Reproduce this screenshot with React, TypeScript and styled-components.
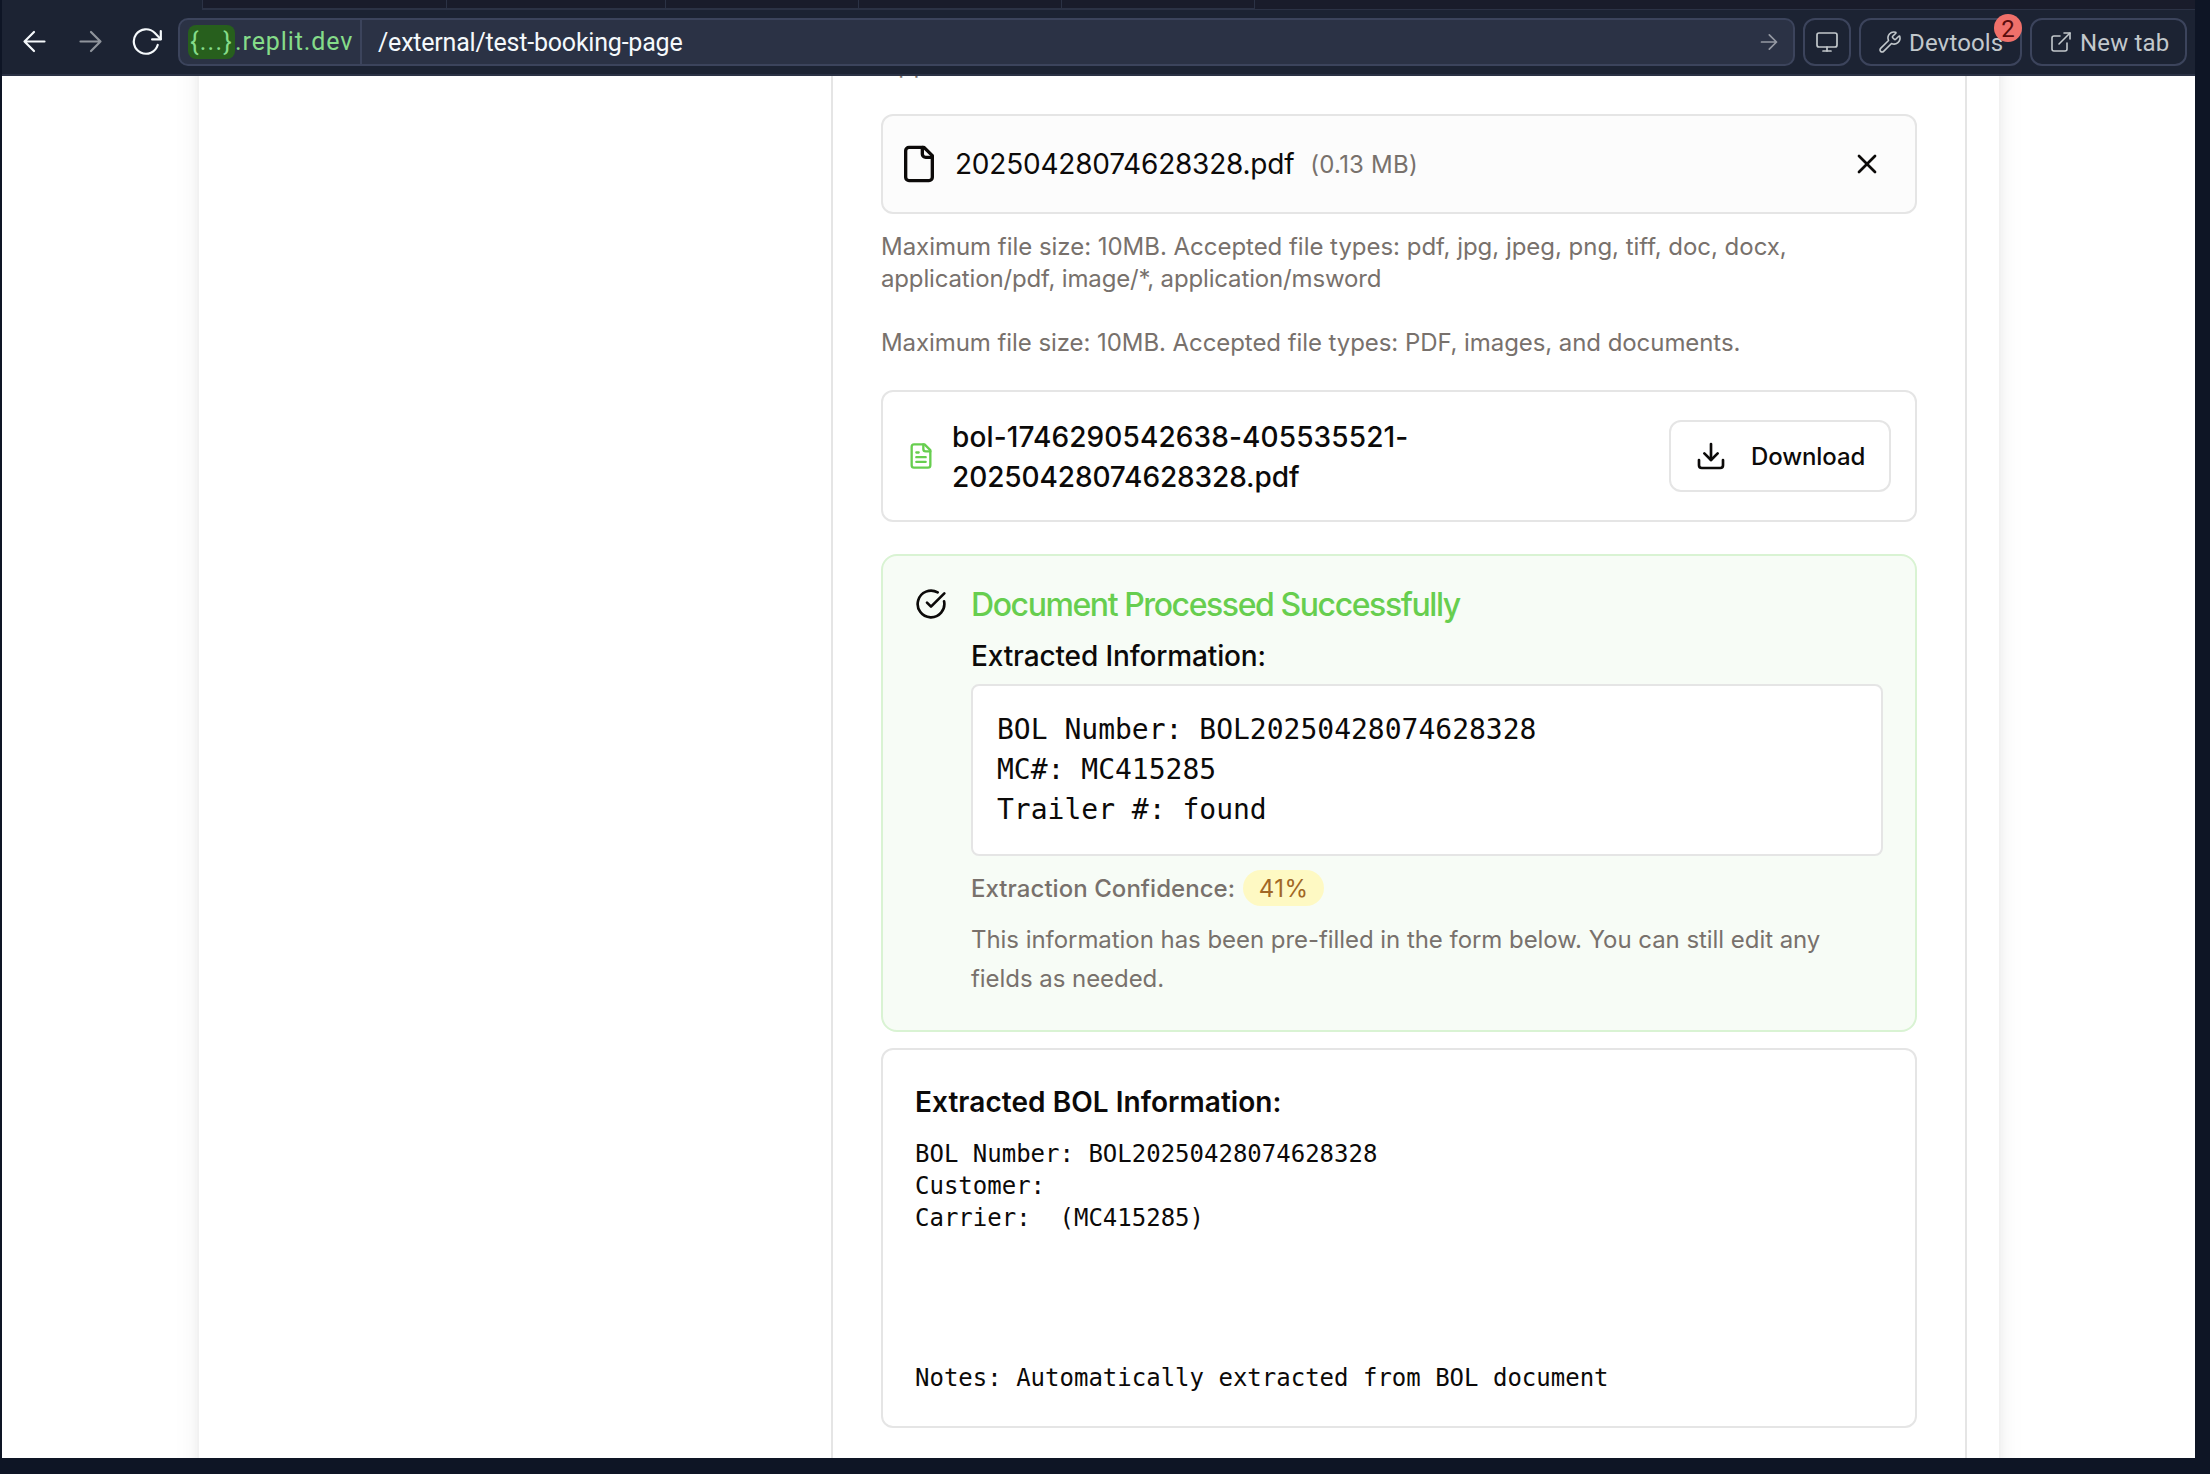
import React from 'react';
import styled, { createGlobalStyle } from 'styled-components';
import { Download, ExternalLink, Monitor, Wrench, X } from 'lucide-react';

const ui = `'Inter', 'Liberation Sans', sans-serif`;
const chromeFont = `'Roboto', 'Liberation Sans', sans-serif`;
const mono = `'DejaVu Sans Mono', 'Liberation Mono', monospace`;

const GlobalStyle = createGlobalStyle`
  *, *::before, *::after { box-sizing: border-box; }
  body { margin: 0; background: #0e1525; overflow: hidden; }
  p, h3, h4, pre { margin: 0; }
  svg { display: block; flex: none; }
`;

const Window = styled.div`
  display: flex;
  flex-direction: column;
  height: 1474px;
  padding: 0 15px 16px 2px;
  background: #0e1525;
`;

/* ---------- browser chrome ---------- */

const TabStrip = styled.div`
  display: flex;
  height: 10px;
  flex: none;
  padding-left: 200px;
  background: #1c2333;
`;

const Tab = styled.div<{ $width: number }>`
  width: ${(p) => p.$width}px;
  background: #191c2b;
  border-left: 1px solid #2b3245;
  border-bottom: 2px solid #2b3245;
`;

const TabRest = styled.div`
  flex: 1;
  background: #191c2b;
  border-left: 1px solid #2b3245;
  border-bottom: 1px solid #2b3245;
`;

const Toolbar = styled.div`
  display: flex;
  align-items: center;
  height: 66px;
  flex: none;
  padding: 0 8px 0 16px;
  gap: 8px;
  background: #1c2333;
  border-bottom: 2px solid #2b3245;
  font-family: ${chromeFont};
`;

const NavButtons = styled.div`
  display: flex;
  align-items: center;
  gap: 24px;
  width: 152px;
`;

const AddressBar = styled.div`
  display: flex;
  align-items: stretch;
  flex: 1;
  height: 48px;
  background: #2b3245;
  border: 2px solid #3c445c;
  border-radius: 10px;
  font-size: 25px;
  line-height: 46px;
`;

const Host = styled.div`
  display: flex;
  align-items: center;
  width: 182px;
  padding-left: 8px;
  border-right: 2px solid #3c445c;
  color: #85dc89;
  letter-spacing: 0.9px;
  white-space: nowrap;
`;

const HostChip = styled.span`
  height: 34px;
  width: 47px;
  flex: none;
  border-radius: 8px;
  background: #275f1d;
  line-height: 34px;
  text-align: center;
  letter-spacing: 1.2px;
`;

const Path = styled.div`
  flex: 1;
  padding-left: 16px;
  color: #f5f9fc;
  letter-spacing: -0.21px;
`;

const Go = styled.div`
  display: flex;
  align-items: center;
  padding-right: 15px;
`;

const ChromeButton = styled.div<{ $width: number }>`
  position: relative;
  display: flex;
  align-items: center;
  width: ${(p) => p.$width}px;
  height: 48px;
  padding-left: ${(p) => (p.$width > 50 ? 17 : 10)}px;
  gap: 7px;
  border: 2px solid #3c445c;
  border-radius: 12px;
  color: #c2c8cc;
  font-size: 24px;
  white-space: nowrap;
`;

const ButtonLabel = styled.span`
  padding-top: 2px;
  line-height: 44px;
  letter-spacing: 0.15px;
`;

const Badge = styled.span`
  position: absolute;
  top: -6px;
  right: -2px;
  width: 28px;
  height: 28px;
  border-radius: 50%;
  background: #f0706a;
  color: #5b0d0d;
  font-size: 24px;
  line-height: 30px;
  text-align: center;
`;

/* ---------- page ---------- */

const Viewport = styled.main`
  flex: 1;
  min-height: 0;
  overflow: hidden;
  background: #fff;
  font-family: ${ui};
  color: #0c0a09;
`;

const Sheet = styled.div`
  width: 1800px;
  height: 1502px;
  margin: -60px 0 0 197px;
  padding: 0 32px 0 632px;
  background: #fff;
  box-shadow: 0 0 30px -6px rgba(0, 0, 0, 0.1), 0 0 12px -4px rgba(0, 0, 0, 0.1);
`;

const Column = styled.div`
  height: 100%;
  padding: 32px 48px 0;
  border: solid #e5e5e5;
  border-width: 0 2px;
`;

const Note = styled.p<{ $top: number; $track?: number }>`
  margin-top: ${(p) => p.$top + 1}px;
  margin-bottom: -1px;
  color: #78716c;
  font-size: 24px;
  line-height: 32px;
  letter-spacing: ${(p) => p.$track ?? 0}px;
  white-space: nowrap;
`;

const Line = styled.span<{ $track: number }>`
  display: block;
  letter-spacing: ${(p) => p.$track}px;
`;

const FileCard = styled.section`
  display: flex;
  align-items: center;
  height: 100px;
  margin-top: 34px;
  padding: 0 16px;
  gap: 16px;
  background: #fcfcfc;
  border: 2px solid #e5e5e5;
  border-radius: 12px;
`;

const FileName = styled.span`
  font-size: 28px;
  line-height: 40px;
  letter-spacing: -0.22px;
`;

const FileSize = styled.span`
  padding-top: 2px;
  color: #78716c;
  font-size: 24px;
  line-height: 32px;
  letter-spacing: 0.22px;
`;

const RemoveButton = styled.div`
  display: grid;
  place-items: center;
  width: 64px;
  height: 64px;
  margin-left: auto;
`;

const DocumentCard = styled.section`
  display: flex;
  align-items: center;
  height: 132px;
  margin-top: 32px;
  padding: 0 24px;
  gap: 17px;
  border: 2px solid #e5e5e5;
  border-radius: 12px;
`;

const DocumentName = styled.div`
  flex: 1;
  padding-top: 1px;
  font-size: 28px;
  font-weight: 500;
  line-height: 40px;
`;

const DownloadButton = styled.div`
  display: flex;
  align-items: center;
  width: 222px;
  height: 72px;
  padding-left: 24px;
  gap: 24px;
  border: 2px solid #e5e5e5;
  border-radius: 12px;
  font-size: 24px;
  font-weight: 500;
  letter-spacing: -0.1px;
`;

const SuccessCard = styled.section`
  display: flex;
  gap: 24px;
  height: 478px;
  margin-top: 32px;
  padding: 32px;
  background: #f7fcf6;
  border: 2px solid #d9f3d3;
  border-radius: 16px;
`;

const SuccessBody = styled.div`
  flex: 1;
`;

const SuccessTitle = styled.h3`
  padding-top: 1px;
  color: #67ce4f;
  font-size: 32px;
  font-weight: 500;
  line-height: 32px;
  letter-spacing: -1.42px;
`;

const SubTitle = styled.h4`
  margin-top: 15px;
  font-size: 28px;
  font-weight: 500;
  line-height: 40px;
  letter-spacing: -0.13px;
`;

const Summary = styled.pre`
  height: 172px;
  width: 912px;
  margin-top: 8px;
  padding: 24px;
  background: #fff;
  border: 2px solid #e5e5e5;
  border-radius: 8px;
  font: 28px/40px ${mono};
`;

const Confidence = styled.div`
  display: flex;
  align-items: center;
  gap: 8px;
  height: 36px;
  margin-top: 14px;
  color: #78716c;
  font-size: 24px;
  font-weight: 500;
  letter-spacing: 0.05px;
`;

const ConfidencePill = styled.span`
  width: 81px;
  height: 36px;
  border-radius: 18px;
  background: #fef9c3;
  color: #a16725;
  font-weight: 400;
  line-height: 38px;
  text-align: center;
  letter-spacing: 0.4px;
`;

const Hint = styled.p`
  margin-top: 14px;
  color: #78716c;
  font-size: 24px;
  line-height: 39px;
  letter-spacing: -0.05px;
  white-space: nowrap;
`;

const ExtractedCard = styled.section`
  height: 380px;
  margin-top: 16px;
  padding: 32px;
  border: 2px solid #e5e5e5;
  border-radius: 12px;
`;

const ExtractedTitle = styled.h4`
  font-size: 28px;
  font-weight: 600;
  line-height: 40px;
  letter-spacing: 0.05px;
`;

const ExtractedText = styled.pre`
  margin-top: 16px;
  font: 24px/32px ${mono};
`;

/* ---------- icons ---------- */

const NavArrow = ({ forward = false }: { forward?: boolean }) => (
  <svg width="32" height="32" viewBox="0 0 32 32" fill="none" stroke={forward ? '#8f949c' : '#f5f9fc'} strokeWidth="2.2" strokeLinecap="round" strokeLinejoin="round">
    {forward ? <path d="M6.500 15.500h20M17 6l9.500 9.500L17 25" /> : <path d="M26.500 15.500h-20M16 6l-9.500 9.500L16 25" />}
  </svg>
);

const Reload = () => (
  <svg width="32" height="32" viewBox="0 0 32 32" fill="none" stroke="#f5f9fc" strokeWidth="2.200" strokeLinecap="round" strokeLinejoin="round">
    <path d="M27.700 19A12.200 12.200 0 1 1 24.600 6.800L30.600 13" />
    <path d="M30.800 5v8.400h-8.700" />
  </svg>
);

const GoArrow = () => (
  <svg width="18" height="18" viewBox="0 0 18 18" fill="none" stroke="#9599a3" strokeWidth="1.700" strokeLinecap="round" strokeLinejoin="round">
    <path d="M1.500 9h15M9.300 1.800 16.500 9l-7.200 7.200" />
  </svg>
);

const FileIcon = ({ size, lines = false, color = '#0c0a09' }: { size: number; lines?: boolean; color?: string }) => (
  <svg width={size} height={size} viewBox="0 0 24 24" fill="none" stroke={color} strokeWidth="2" strokeLinecap="round" strokeLinejoin="round">
    <path d="M15 2H6a2 2 0 0 0-2 2v16a2 2 0 0 0 2 2h12a2 2 0 0 0 2-2V7Z" />
    <path d="M14 2v4a2 2 0 0 0 2 2h4" />
    {lines && <path d="M10 9H8M16 13H8M16 17H8" />}
  </svg>
);

const CheckIcon = () => (
  <svg width="32" height="32" viewBox="0 0 24 24" fill="none" stroke="#0c0a09" strokeWidth="2" strokeLinecap="round" strokeLinejoin="round">
    <path d="M21.801 10A10 10 0 1 1 17 3.335" />
    <path d="m9 11 3 3L22 4" />
  </svg>
);

const summary = `BOL Number: BOL20250428074628328
MC#: MC415285
Trailer #: found`;

const extracted = `BOL Number: BOL20250428074628328
Customer: 
Carrier:  (MC415285)




Notes: Automatically extracted from BOL document`;

const tabWidths = [244, 219, 193, 203, 193];

export default function App() {
  return (
    <>
      <GlobalStyle />
      <Window>
        <TabStrip>
          {tabWidths.map((w, i) => (
            <Tab key={i} $width={w} />
          ))}
          <TabRest />
        </TabStrip>
        <Toolbar>
          <NavButtons>
            <NavArrow />
            <NavArrow forward />
            <Reload />
          </NavButtons>
          <AddressBar>
            <Host>
              <HostChip>{'{...}'}</HostChip>.replit.dev
            </Host>
            <Path>/external/test-booking-page</Path>
            <Go>
              <GoArrow />
            </Go>
          </AddressBar>
          <ChromeButton $width={48}>
            <Monitor size={24} strokeWidth={1.7} />
          </ChromeButton>
          <ChromeButton $width={163}>
            <Wrench size={24} strokeWidth={1.6} />
            <ButtonLabel>Devtools</ButtonLabel>
            <Badge>2</Badge>
          </ChromeButton>
          <ChromeButton $width={157}>
            <ExternalLink size={24} strokeWidth={1.6} />
            <ButtonLabel>New tab</ButtonLabel>
          </ChromeButton>
        </Toolbar>

        <Viewport>
          <Sheet>
            <Column>
              <Note $top={0} $track={0.6}>App</Note>
              <FileCard>
                <FileIcon size={40} />
                <FileName>20250428074628328.pdf</FileName>
                <FileSize>(0.13 MB)</FileSize>
                <RemoveButton>
                  <X size={32} color="#0c0a09" strokeWidth={2} />
                </RemoveButton>
              </FileCard>
              <Note $top={16}>
                <Line $track={-0.03}>Maximum file size: 10MB. Accepted file types: pdf, jpg, jpeg, png, tiff, doc, docx,</Line>
                <Line $track={-0.15}>application/pdf, image/*, application/msword</Line>
              </Note>
              <Note $top={32} $track={-0.07}>
                Maximum file size: 10MB. Accepted file types: PDF, images, and documents.
              </Note>

              <DocumentCard>
                <FileIcon size={28} lines color="#67ce4f" />
                <DocumentName>
                  <Line $track={0.12}>bol-1746290542638-405535521-</Line>
                  <Line $track={-0.1}>20250428074628328.pdf</Line>
                </DocumentName>
                <DownloadButton>
                  <Download size={32} strokeWidth={2} />
                  Download
                </DownloadButton>
              </DocumentCard>

              <SuccessCard>
                <CheckIcon />
                <SuccessBody>
                  <SuccessTitle>Document Processed Successfully</SuccessTitle>
                  <SubTitle>Extracted Information:</SubTitle>
                  <Summary>{summary}</Summary>
                  <Confidence>
                    Extraction Confidence:
                    <ConfidencePill>41%</ConfidencePill>
                  </Confidence>
                  <Hint>
                    This information has been pre-filled in the form below. You can still edit any
                    <br />
                    fields as needed.
                  </Hint>
                </SuccessBody>
              </SuccessCard>

              <ExtractedCard>
                <ExtractedTitle>Extracted BOL Information:</ExtractedTitle>
                <ExtractedText>{extracted}</ExtractedText>
              </ExtractedCard>
            </Column>
          </Sheet>
        </Viewport>
      </Window>
    </>
  );
}
